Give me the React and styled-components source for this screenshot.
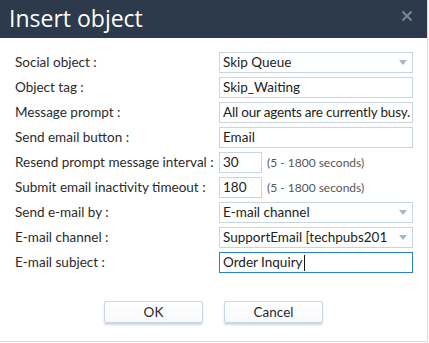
import React from "react";
import styled, { createGlobalStyle } from "styled-components";

const Global = createGlobalStyle`
  html, body { margin: 0; padding: 0; background: #fff; }
  body { font-family: Lato, "Open Sans", sans-serif; color: #2a2a2a; }
`;

const Dialog = styled.div`
  width: 427px;
  height: 341px;
  border-right: 1px solid #d3dbe5;
  border-bottom: 1px solid #d3dbe5;
  background: #fff;
  display: flex;
  flex-direction: column;
`;

const Header = styled.div`
  height: 38px;
  flex: none;
  background: #2c3a4b;
  display: flex;
  align-items: center;
  justify-content: space-between;
  padding: 0 14px 0 9px;
`;

const Title = styled.h1`
  margin: 0;
  font-family: "Open Sans", sans-serif;
  font-size: 23px;
  font-weight: 400;
  color: #fff;
  line-height: 1;
  padding-bottom: 2px;
`;

const Close = styled.button`
  border: 0;
  background: none;
  padding: 0;
  width: 12px;
  height: 12px;
  margin-top: -6px;
  display: flex;
  cursor: pointer;
`;

const Form = styled.div`
  display: grid;
  grid-template-columns: 204px 194px;
  grid-auto-rows: 21px;
  row-gap: 4px;
  padding: 14px 0 0 15px;
`;

const Label = styled.div`
  font-size: 13.5px;
  line-height: 21px;
  color: #2b2b2b;
  white-space: nowrap;
`;

const Field = styled.div`
  box-sizing: border-box;
  height: 21px;
  width: ${(p) => (p.$small ? "43px" : "194px")};
  border: 1px solid ${(p) => (p.$focused ? "#2a7fd4" : "#c9d4e1")};
  background: #fff;
  font-size: 13.5px;
  letter-spacing: ${(p) => (p.$tight ? "-0.18px" : "0")};
  line-height: 19px;
  padding: 0 ${(p) => (p.$tight ? "0 0 3px" : "3px")};
  color: #222;
  white-space: nowrap;
  overflow: hidden;
  position: relative;
  display: flex;
  align-items: center;
`;

const Arrow = styled.svg`
  position: absolute;
  right: 5px;
  top: 7px;
`;

const Caret = styled.span`
  display: inline-block;
  width: 1px;
  height: 16px;
  background: #111;
  margin-left: 1px;
`;

const Inline = styled.div`
  display: flex;
  align-items: center;
  gap: 5px;
`;

const Hint = styled.span`
  font-size: 12px;
  color: #555;
  white-space: nowrap;
`;

const Buttons = styled.div`
  display: flex;
  justify-content: center;
  gap: 21px;
  margin-top: 28px;
`;

const Button = styled.button`
  box-sizing: border-box;
  width: 99px;
  height: 22px;
  border: 1px solid #cdd7e3;
  border-radius: 2px;
  background: linear-gradient(#ffffff, #f7f9fb);
  box-shadow: 0 2px 2px rgba(120, 140, 170, 0.35);
  font-family: inherit;
  font-size: 13.5px;
  color: #2a2a2a;
  padding: 0;
  cursor: pointer;
`;

const Select = ({ children }) => (
  <Field>
    {children}
    <Arrow width="8" height="5" viewBox="0 0 8 5">
      <path d="M0 0 H8 L4 5 Z" fill="#a7b6c8" />
    </Arrow>
  </Field>
);

export default function App() {
  return (
    <>
      <Global />
      <Dialog>
        <Header>
          <Title>Insert object</Title>
          <Close aria-label="Close">
            <svg width="12" height="12" viewBox="0 0 12 12">
              <path d="M1.5 1.5 L10.5 10.5 M10.5 1.5 L1.5 10.5" stroke="#74849a" strokeWidth="2.2" />
            </svg>
          </Close>
        </Header>
        <Form>
          <Label>Social object :</Label>
          <Select>Skip Queue</Select>
          <Label>Object tag :</Label>
          <Field>Skip_Waiting</Field>
          <Label>Message prompt :</Label>
          <Field $tight>All our agents are currently busy.</Field>
          <Label>Send email button :</Label>
          <Field>Email</Field>
          <Label>Resend prompt message interval :</Label>
          <Inline>
            <Field $small>30</Field>
            <Hint>(5 - 1800 seconds)</Hint>
          </Inline>
          <Label>Submit email inactivity timeout :</Label>
          <Inline>
            <Field $small>180</Field>
            <Hint>(5 - 1800 seconds)</Hint>
          </Inline>
          <Label>Send e-mail by :</Label>
          <Select>E-mail channel</Select>
          <Label>E-mail channel :</Label>
          <Select>SupportEmail [techpubs201</Select>
          <Label>E-mail subject :</Label>
          <Field $focused>
            Order Inquiry
            <Caret />
          </Field>
        </Form>
        <Buttons>
          <Button>OK</Button>
          <Button>Cancel</Button>
        </Buttons>
      </Dialog>
    </>
  );
}
